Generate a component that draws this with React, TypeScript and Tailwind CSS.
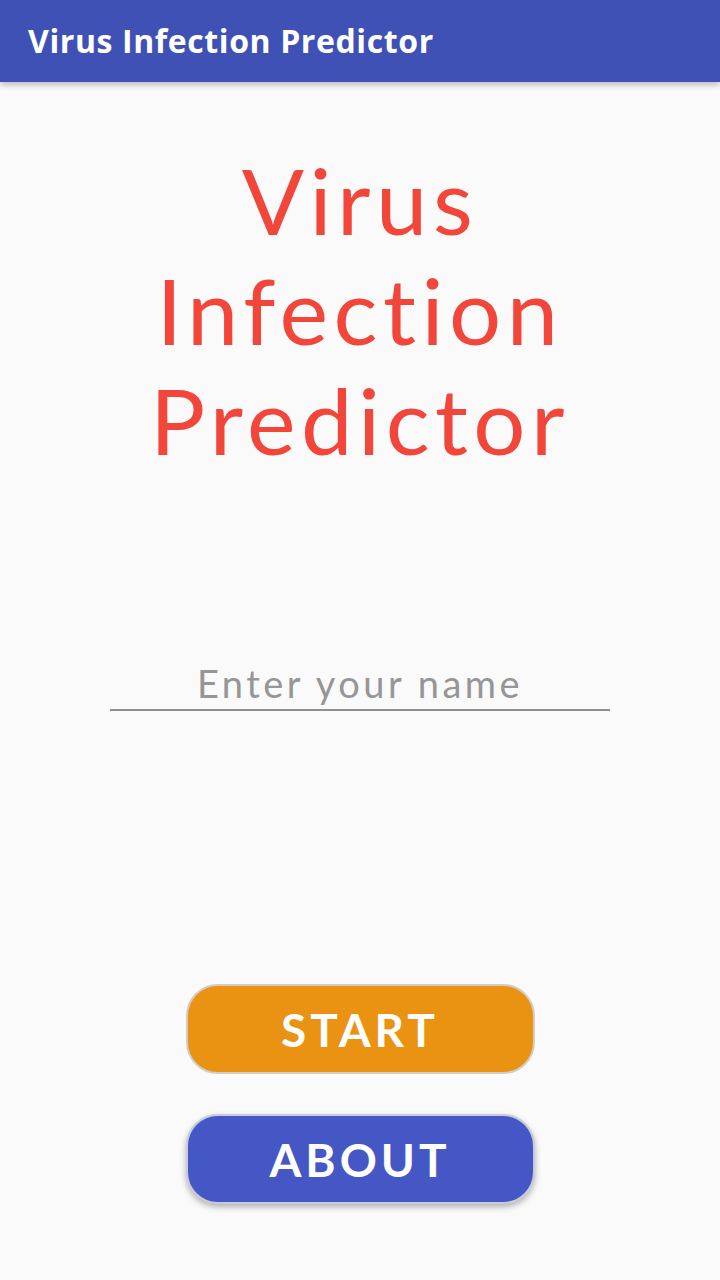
import React from "react";

export default function App() {
  return (
    <div className="w-[720px] h-[1280px] bg-[#fafafa] flex flex-col overflow-hidden" style={{ fontFamily: "Lato, 'Open Sans', sans-serif" }}>
      <div className="h-[82px] bg-[#3f51b5] flex items-center pl-[28px] shadow-[0_3px_6px_rgba(0,0,0,0.25)] relative z-10">
        <span className="text-white font-bold text-[32px] leading-none tracking-[0.6px] -mt-[1px]" style={{ fontFamily: "'Open Sans', Lato, sans-serif" }}>Virus Infection Predictor</span>
      </div>
      <div className="flex flex-col items-center">
        <div className="mt-[63px] text-[#f2463b] text-[92px] leading-[110px] text-center tracking-[5.5px]">
          <div>Virus</div>
          <div>Infection</div>
          <div>Predictor</div>
        </div>
        <div className="mt-[184px] w-[500px] border-b-2 border-[#8f8f8f] flex justify-center pb-[2px]">
          <input
            placeholder="Enter your name"
            className="w-full bg-transparent text-center text-[38px] leading-[48px] tracking-[3.5px] outline-none placeholder:text-[#969696] text-[#555]"
          />
        </div>
        <button className="mt-[273px] w-[349px] h-[90px] rounded-[32px] bg-[#ea9212] border-2 border-[#d3ccc4] text-white font-bold text-[46px] tracking-[4px] flex items-center justify-center">
          START
        </button>
        <button className="mt-[40px] w-[349px] h-[90px] rounded-[32px] bg-[#4557c4] border-2 border-[#c8cbd8] text-white font-bold text-[46px] tracking-[4px] flex items-center justify-center shadow-[0_3px_6px_rgba(0,0,0,0.3)]">
          ABOUT
        </button>
      </div>
    </div>
  );
}
